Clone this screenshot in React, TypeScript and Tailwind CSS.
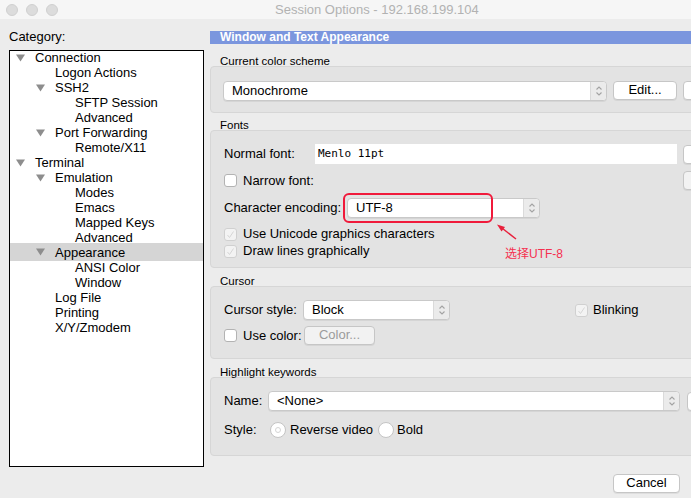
import React from "react";

const FONT = { fontFamily: '"Liberation Sans", Arial, "Noto Sans CJK SC", sans-serif' };

type Node = { level: number; label: string; open?: boolean; selected?: boolean };

const tree: Node[] = [
  { level: 0, label: "Connection", open: true },
  { level: 1, label: "Logon Actions" },
  { level: 1, label: "SSH2", open: true },
  { level: 2, label: "SFTP Session" },
  { level: 2, label: "Advanced" },
  { level: 1, label: "Port Forwarding", open: true },
  { level: 2, label: "Remote/X11" },
  { level: 0, label: "Terminal", open: true },
  { level: 1, label: "Emulation", open: true },
  { level: 2, label: "Modes" },
  { level: 2, label: "Emacs" },
  { level: 2, label: "Mapped Keys" },
  { level: 2, label: "Advanced" },
  { level: 1, label: "Appearance", open: true, selected: true },
  { level: 2, label: "ANSI Color" },
  { level: 2, label: "Window" },
  { level: 1, label: "Log File" },
  { level: 1, label: "Printing" },
  { level: 1, label: "X/Y/Zmodem" },
];

function Triangle() {
  return (
    <svg width="9" height="8" viewBox="0 0 9 8">
      <polygon points="0,0.5 9,0.5 4.5,7.5" fill="#8d8d8d" />
    </svg>
  );
}

function TreeRow({ n }: { n: Node }) {
  const pad = [6, 26, 46][n.level];
  return (
    <div
      className={
        n.selected
          ? "flex items-center h-[18px] -mt-[2px] -mb-[1px] bg-[#d5d5d5]"
          : "flex items-center h-[15px]"
      }
      style={{ paddingLeft: pad }}
    >
      <div className="w-[9px] h-[8px] flex items-center">{n.open ? <Triangle /> : null}</div>
      <span className="ml-[10px] text-[13px] leading-[15px] text-black whitespace-nowrap">{n.label}</span>
    </div>
  );
}

function Stepper() {
  return (
    <div className="w-[16px] h-full flex items-center justify-center bg-[#ebebeb] border-l border-[#dadada] rounded-r-[4px]">
      <svg width="8" height="12" viewBox="0 0 8 12">
        <polyline points="1.5,4.5 4,2 6.5,4.5" fill="none" stroke="#a3a3a3" strokeWidth="1.1" />
        <polyline points="1.5,7.5 4,10 6.5,7.5" fill="none" stroke="#a3a3a3" strokeWidth="1.1" />
      </svg>
    </div>
  );
}

function Select({ w, text }: { w: string; text: string }) {
  return (
    <div
      className={`${w} h-[20px] shrink-0 flex items-stretch bg-white border border-[#c9c9c9] rounded-[4px] shadow-[0_1px_0_rgba(0,0,0,0.06)]`}
    >
      <div className="flex-1 flex items-center pl-[8px] pb-[1px] text-[13px] text-black whitespace-nowrap">{text}</div>
      <Stepper />
    </div>
  );
}

function Button({ w, text, disabled }: { w: string; text?: string; disabled?: boolean }) {
  return (
    <div
      className={`${w} h-[19px] shrink-0 flex items-center justify-center pb-[1px] rounded-[4px] border border-[#c6c6c6] text-[13px] ${
        disabled ? "bg-[#f2f2f2] text-[#9b9b9b]" : "bg-white text-black"
      } shadow-[0_1px_0_rgba(0,0,0,0.06)]`}
    >
      {text}
    </div>
  );
}

function Checkbox({ disabled, checked }: { disabled?: boolean; checked?: boolean }) {
  return (
    <div
      className={`w-[13px] h-[13px] shrink-0 rounded-[3px] border flex items-center justify-center ${
        disabled ? "bg-[#f3f3f3] border-[#d0d0d0]" : "bg-white border-[#b3b3b3]"
      }`}
    >
      {checked ? (
        <svg width="9" height="9" viewBox="0 0 9 9">
          <polyline points="1.5,5 3.5,7.5 7.5,1.5" fill="none" stroke="#d6d6d6" strokeWidth="1" />
        </svg>
      ) : null}
    </div>
  );
}

function Radio({ dot }: { dot?: boolean }) {
  return (
    <div className="w-[16px] h-[16px] shrink-0 rounded-full bg-white border border-[#c4c4c4] flex items-center justify-center">
      {dot ? <div className="w-[6px] h-[6px] rounded-full border border-[#d4d4d4]" /> : null}
    </div>
  );
}

function GroupLabel({ text }: { text: string }) {
  return (
    <div className="h-[11px] pl-[10px] text-[11.5px] leading-[13px] text-black whitespace-nowrap relative z-10">
      {text}
    </div>
  );
}

export default function App() {
  return (
    <div className="w-[691px] h-[498px] overflow-hidden bg-[#ececec] flex flex-col" style={FONT}>
      {/* title bar */}
      <div className="h-[19px] shrink-0 bg-[#f6f6f6] flex items-center pl-[6px]">
        <div className="flex gap-[8px]">
          <div className="w-[12px] h-[12px] rounded-full bg-[#dcdcdc] border border-[#d0d0d0]" />
          <div className="w-[12px] h-[12px] rounded-full bg-[#dcdcdc] border border-[#d0d0d0]" />
          <div className="w-[12px] h-[12px] rounded-full bg-[#dcdcdc] border border-[#d0d0d0]" />
        </div>
        <div className="ml-[217px] text-[13px] leading-[15px] text-[#b2b2b2] whitespace-nowrap">
          Session Options - 192.168.199.104
        </div>
      </div>

      {/* body */}
      <div className="flex pl-[9px] flex-1">
        {/* left column */}
        <div className="w-[195px] shrink-0 flex flex-col">
          <div className="mt-[10px] text-[13px] leading-[15px] text-black">Category:</div>
          <div className="mt-[6px] h-[417px] bg-white border border-black flex flex-col">
            <div className="-mt-[1px] flex flex-col">
              {tree.map((n, i) => (
                <TreeRow key={i} n={n} />
              ))}
            </div>
          </div>
        </div>

        {/* right column */}
        <div className="ml-[6px] w-[500px] shrink-0 flex flex-col">
          <div className="mt-[12px] h-[13px] bg-[#7b96de] pl-[10px] text-[12px] leading-[13px] font-bold text-white whitespace-nowrap">
            Window and Text Appearance
          </div>

          {/* Current color scheme */}
          <div className="mt-[11px]">
            <GroupLabel text="Current color scheme" />
          </div>
          <div className="h-[47px] bg-[#e3e3e3] border border-[#d6d6d6] rounded-[4px] flex items-start pt-[14px] pl-[12px] gap-[6px] overflow-hidden">
            <Select w="w-[384px]" text="Monochrome" />
            <Button w="w-[64px]" text="Edit..." />
            <Button w="w-[64px]" />
          </div>

          {/* Fonts */}
          <div className="mt-[6px]">
            <GroupLabel text="Fonts" />
          </div>
          <div className="relative h-[138px] bg-[#e3e3e3] border border-[#d6d6d6] rounded-[4px] flex flex-col pl-[13px] pt-[13px]">
            <div className="w-[519px] shrink-0 flex items-center justify-between h-[20px]">
              <div className="flex items-center">
                <div className="w-[91px] text-[13px] text-black">Normal font:</div>
                <div
                  className="w-[362px] h-[20px] bg-white flex items-center pl-[3px] text-[11px] text-black"
                  style={{ fontFamily: '"DejaVu Sans Mono", monospace' }}
                >
                  Menlo 11pt
                </div>
              </div>
              <Button w="w-[60px]" />
            </div>
            <div className="mt-[7px] w-[519px] shrink-0 flex items-center justify-between h-[19px]">
              <div className="flex items-center">
                <Checkbox />
                <span className="ml-[6px] text-[13px] text-black">Narrow font:</span>
              </div>
              <Button w="w-[60px]" disabled />
            </div>
            <div className="mt-[8px] flex items-center h-[20px]">
              <div className="w-[123px] text-[13px] text-black whitespace-nowrap">Character encoding:</div>
              <Select w="w-[193px]" text="UTF-8" />
            </div>
            <div className="mt-[9px] flex items-center h-[14px]">
              <Checkbox disabled checked />
              <span className="ml-[6px] text-[13px] leading-[14px] text-black">Use Unicode graphics characters</span>
            </div>
            <div className="mt-[3px] flex items-center h-[14px]">
              <Checkbox disabled checked />
              <span className="ml-[6px] text-[13px] leading-[14px] text-black">Draw lines graphically</span>
            </div>

            {/* annotation */}
            <div className="absolute left-[132px] top-[62px] w-[150px] h-[30px] border-2 border-[#f01a3b] rounded-[6px]" />
            <svg className="absolute left-[280px] top-[88px]" width="40" height="30" viewBox="0 0 40 30">
              <line x1="25" y1="20" x2="10" y2="8.3" stroke="#e8203c" strokeWidth="1.4" />
              <polygon points="6,5.5 14,8 10.5,12.6" fill="#e8203c" />
            </svg>
            <div className="absolute left-[294px] top-[116px] text-[12px] leading-[14px] text-[#f5304f] whitespace-nowrap">
              选择UTF-8
            </div>
          </div>

          {/* Cursor */}
          <div className="mt-[7px]">
            <GroupLabel text="Cursor" />
          </div>
          <div className="h-[73px] bg-[#e3e3e3] border border-[#d6d6d6] rounded-[4px] flex flex-col pl-[13px] pt-[13px]">
            <div className="flex items-center h-[20px]">
              <div className="w-[79px] text-[13px] text-black">Cursor style:</div>
              <Select w="w-[147px]" text="Block" />
              <div className="ml-[125px]">
                <Checkbox disabled checked />
              </div>
              <span className="ml-[5px] text-[13px] text-black">Blinking</span>
            </div>
            <div className="mt-[6px] flex items-center h-[19px]">
              <Checkbox />
              <span className="ml-[6px] w-[61px] text-[13px] text-black">Use color:</span>
              <Button w="w-[71px]" text="Color..." disabled />
            </div>
          </div>

          {/* Highlight keywords */}
          <div className="mt-[7px]">
            <GroupLabel text="Highlight keywords" />
          </div>
          <div className="h-[79px] bg-[#e3e3e3] border border-[#d6d6d6] rounded-[4px] flex flex-col pl-[13px] pt-[13px] overflow-hidden">
            <div className="flex items-center h-[20px]">
              <div className="w-[44px] shrink-0 text-[13px] text-black">Name:</div>
              <Select w="w-[412px]" text="<None>" />
              <div className="ml-[7px] shrink-0">
                <Button w="w-[60px]" />
              </div>
            </div>
            <div className="mt-[11px] flex items-center h-[16px]">
              <div className="w-[46px] text-[13px] text-black">Style:</div>
              <Radio dot />
              <span className="ml-[4px] w-[88px] text-[13px] text-black whitespace-nowrap">Reverse video</span>
              <Radio />
              <span className="ml-[3px] text-[13px] text-black">Bold</span>
            </div>
          </div>

          <div className="mt-[18px] ml-[403px]">
            <Button w="w-[67px]" text="Cancel" />
          </div>
        </div>
      </div>
    </div>
  );
}
